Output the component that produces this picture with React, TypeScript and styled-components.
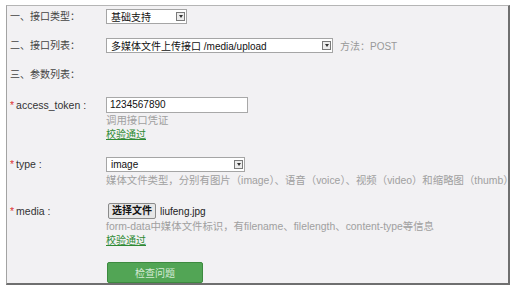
import React from "react";
import styled, { createGlobalStyle } from "styled-components";

const Global = createGlobalStyle`
  html, body { margin: 0; padding: 0; background: #ffffff; }
  body { font-family: "Liberation Sans", "Noto Sans CJK SC", sans-serif; }
`;

const Page = styled.div`
  padding: 5px 0 0 6px;
  width: 515px;
  height: 289px;
  box-sizing: border-box;
`;

const Frame = styled.div`
  width: 504px;
  height: 280px;
  box-sizing: border-box;
  background: #f2f1f3;
  border-left: 1px solid #a3a3a3;
  border-top: 1px solid #b5b5b5;
  border-right: 2px solid #6f6f6f;
  border-bottom: 2px solid #6f6f6f;
  padding: 0 0 0 3px;
  display: flex;
  flex-direction: column;
`;

const Row = styled.div<{ $mt: number }>`
  display: flex;
  align-items: flex-start;
  margin-top: ${(p) => p.$mt}px;
`;

const Label = styled.div<{ $h?: number }>`
  width: 96px;
  flex: none;
  height: ${(p) => p.$h ?? 15}px;
  line-height: ${(p) => p.$h ?? 15}px;
  font-size: 10px;
  color: #444;
  white-space: nowrap;
  padding-left: 2px;
  margin-left: -2px;
`;

const LatinLabel = styled(Label)`
  font-size: 10.5px;
  color: #333;
`;

const Star = styled.span`
  color: #d33;
  margin-right: 2px;
`;

const Col = styled.div`
  display: flex;
  flex-direction: column;
  align-items: flex-start;
`;

const Inline = styled.div`
  display: flex;
  align-items: center;
  gap: 7px;
`;

const Select = styled.div<{ $w: number }>`
  width: ${(p) => p.$w}px;
  height: 15px;
  box-sizing: border-box;
  background: #fff;
  border: 1px solid #a5a5a5;
  display: flex;
  align-items: center;
  justify-content: space-between;
  padding: 0 1px 0 4px;
  font-size: 10px;
  color: #111;
  white-space: nowrap;
`;

const Arrow = styled.span`
  width: 9px;
  height: 9px;
  box-sizing: border-box;
  border: 1px solid #7a7a7a;
  background: #ececec;
  display: flex;
  align-items: center;
  justify-content: center;
  &::after {
    content: "";
    border-left: 2.5px solid transparent;
    border-right: 2.5px solid transparent;
    border-top: 3px solid #333;
  }
`;

const Method = styled.span`
  font-size: 10px;
  color: #999;
`;

const TextInput = styled.div`
  width: 142px;
  height: 16px;
  box-sizing: border-box;
  background: #fff;
  border: 1px solid #a8a8a8;
  padding-left: 3px;
  font-size: 10px;
  line-height: 14px;
  color: #111;
`;

const Hint = styled.div<{ $mt?: number }>`
  font-size: 10.4px;
  line-height: 14px;
  color: #a0a0a0;
  white-space: nowrap;
  margin-top: ${(p) => p.$mt ?? 0}px;
`;

const Ok = styled.a`
  font-size: 10px;
  line-height: 14px;
  color: #2f8a34;
  text-decoration: underline;
`;

const FileRow = styled.div`
  display: flex;
  align-items: center;
  gap: 4px;
  margin-left: 2px;
`;

const FileButton = styled.span`
  height: 16px;
  box-sizing: border-box;
  padding: 0 3px;
  background: #e6e6e6;
  border: 1px solid #8a8a8a;
  border-radius: 2px;
  font-size: 10px;
  line-height: 14px;
  font-weight: bold;
  color: #111;
`;

const FileName = styled.span`
  font-size: 10px;
  color: #222;
`;

const Submit = styled.button`
  margin-left: 97px;
  width: 96px;
  height: 21px;
  border: 1px solid #3d8a3f;
  border-radius: 2px;
  background: #52a555;
  color: #d5ead5;
  font-size: 10px;
  font-family: "Noto Sans CJK SC", sans-serif;
  padding: 0;
`;

export default function App() {
  return (
    <>
      <Global />
      <Page>
        <Frame>
          <Row $mt={3}>
            <Label>一、接口类型：</Label>
            <Select $w={81}>
              基础支持
              <Arrow />
            </Select>
          </Row>
          <Row $mt={14}>
            <Label>二、接口列表：</Label>
            <Inline>
              <Select $w={227}>
                多媒体文件上传接口 /media/upload
                <Arrow />
              </Select>
              <Method>方法：POST</Method>
            </Inline>
          </Row>
          <Row $mt={14}>
            <Label>三、参数列表：</Label>
          </Row>
          <Row $mt={15}>
            <LatinLabel $h={16}>
              <Star>*</Star>access_token :
            </LatinLabel>
            <Col>
              <TextInput>1234567890</TextInput>
              <Hint $mt={1}>调用接口凭证</Hint>
              <Ok>校验通过</Ok>
            </Col>
          </Row>
          <Row $mt={15}>
            <LatinLabel>
              <Star>*</Star>type :
            </LatinLabel>
            <Col>
              <Select $w={139}>
                image
                <Arrow />
              </Select>
              <Hint $mt={2}>
                媒体文件类型，分别有图片（image）、语音（voice）、视频（video）和缩略图（thumb）
              </Hint>
            </Col>
          </Row>
          <Row $mt={15}>
            <LatinLabel $h={16}>
              <Star>*</Star>media :
            </LatinLabel>
            <Col>
              <FileRow>
                <FileButton>选择文件</FileButton>
                <FileName>liufeng.jpg</FileName>
              </FileRow>
              <Hint $mt={1}>
                form-data中媒体文件标识，有filename、filelength、content-type等信息
              </Hint>
              <Ok>校验通过</Ok>
            </Col>
          </Row>
          <Row $mt={14}>
            <Submit>检查问题</Submit>
          </Row>
        </Frame>
      </Page>
    </>
  );
}
